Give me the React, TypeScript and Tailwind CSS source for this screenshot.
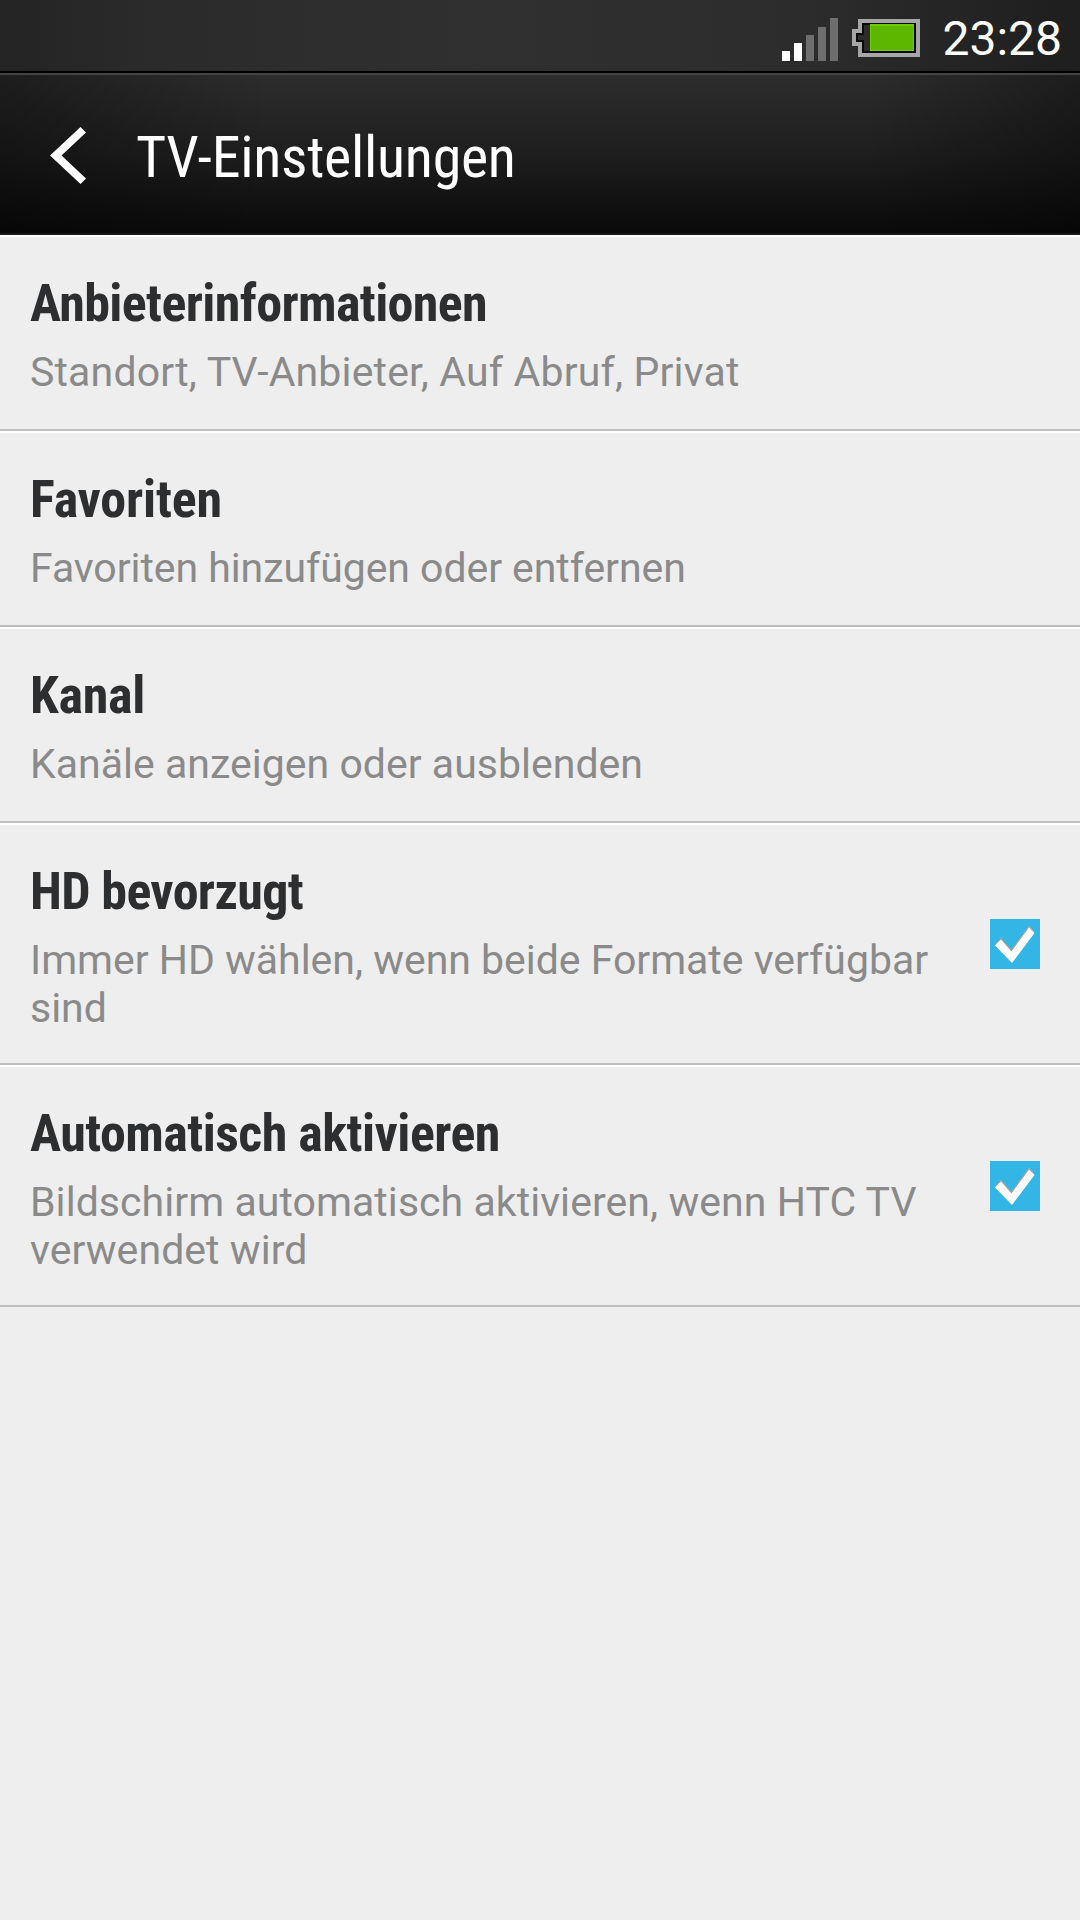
import React from 'react';

interface SettingItem {
    id: string;
    title: string;
    titleClass: string;
    summary: string;
    summaryClass: string;
    checked?: boolean;
}

const SETTINGS: SettingItem[] = [
    {
        id: 'provider',
        title: 'Anbieterinformationen',
        titleClass: 'tracking-[-0.62px]',
        summary: 'Standort, TV-Anbieter, Auf Abruf, Privat',
        summaryClass: 'tracking-[0.17px]',
    },
    {
        id: 'favorites',
        title: 'Favoriten',
        titleClass: 'tracking-[-0.2px]',
        summary: 'Favoriten hinzufügen oder entfernen',
        summaryClass: 'tracking-[-0.06px]',
    },
    {
        id: 'channel',
        title: 'Kanal',
        titleClass: 'tracking-[-0.3px]',
        summary: 'Kanäle anzeigen oder ausblenden',
        summaryClass: 'tracking-[0.02px]',
    },
    {
        id: 'hd',
        title: 'HD bevorzugt',
        titleClass: 'tracking-[-0.65px]',
        summary: 'Immer HD wählen, wenn beide Formate verfügbar sind',
        summaryClass: 'tracking-[-0.02px]',
        checked: true,
    },
    {
        id: 'wake',
        title: 'Automatisch aktivieren',
        titleClass: 'tracking-[-0.53px]',
        summary: 'Bildschirm automatisch aktivieren, wenn HTC TV verwendet wird',
        summaryClass: 'tracking-[0.06px]',
        checked: true,
    },
];

const SignalIcon: React.FC = () => (
    <svg width="56" height="44" viewBox="0 0 56 44" className="block">
        <path d="M0 33h8v10H0zM12 25h8v18h-8z" fill="#fff" />
        <path d="M24 17h8v26h-8zM36 9h8v34h-8zM48 0h8v43h-8z" fill="#6e6e6e" />
    </svg>
);

const BatteryIcon: React.FC = () => (
    <svg width="68" height="38" viewBox="0 0 68 38" className="block">
        <path d="M6 0h62v38H6V27H0V10h6z" fill="#a6a6a6" />
        <path d="M10 4h54v30H10V23H4v-9h6z" fill="#0a0a0a" />
        <path d="M12 6h6v26h-6v-11H6v-5h6z" fill="#2c2c2c" />
        <path d="M18 5h44v27H18z" fill="#6ccc00" />
        <path d="M19 7h42v24H19z" fill="#5db600" />
    </svg>
);

const CheckBox: React.FC = () => (
    <svg width="50" height="50" viewBox="0 0 50 50" className="block shrink-0">
        <path d="M0 0h50v50H0z" fill="#33b5e5" />
        <path d="M5 25l6-6.500 10.500 12L39 6.500l5.500 5.500L22 43z" fill="#9aa5aa" />
        <path d="M5 26.500l6-6 10.500 12L39 8.500l5.500 5.500L22 44z" fill="#fff" />
    </svg>
);

const SettingRow: React.FC<{ item: SettingItem }> = ({ item }) => (
    <div className="flex min-h-[196px] items-center border-t-2 border-b-2 border-t-white border-b-[#bebebe] pr-10 pl-[30px]">
        <div className="flex-1 self-start pt-[35px] pb-[31px]">
            <div className={`text-[52px] leading-[64px] font-bold whitespace-nowrap text-[#2d2e30] font-stretch-condensed ${item.titleClass}`}>
                {item.title}
            </div>
            <div className={`mt-3 max-w-[910px] text-[41px] leading-[48px] text-[#8a8a8a] ${item.summaryClass}`}>{item.summary}</div>
        </div>
        {item.checked && <CheckBox />}
    </div>
);

export default function App() {
    return (
        <div className="flex h-[1920px] w-[1080px] flex-col overflow-hidden bg-[#eeeeee] font-['Roboto','Noto_Sans',sans-serif]">
            <div className="flex h-[73px] shrink-0 items-start justify-end border-b-2 border-black bg-[linear-gradient(90deg,#242424_0%,#2b2b2b_15%,#303030_45%,#2c2c2c_75%,#1e1e1e_100%)] pr-[18px]">
                <div className="mt-[18px] mr-[14px]"><SignalIcon /></div>
                <div className="mt-[19px] mr-[22px]"><BatteryIcon /></div>
                <div className="text-[48px] leading-[78px] text-white">23:28</div>
            </div>
            <div className="flex h-[162px] shrink-0 items-center border-t-2 border-b-2 border-t-[#444444] border-b-[#181818] bg-[linear-gradient(90deg,rgba(0,0,0,0.35)_0%,rgba(0,0,0,0)_25%,rgba(0,0,0,0)_80%,rgba(0,0,0,0.35)_100%),linear-gradient(180deg,#2d2d2d_0%,#1e1e1e_50%,#0a0a0a_100%)] pt-0.5 pl-[50px]">
                <svg width="36" height="57" viewBox="0 0 36 57" className="block">
                    <path d="M30.500 0L36 5.500 11.500 28.500 36 51.500 30.500 57 0 28.500z" fill="#fff" />
                </svg>
                <h1 className="mt-[5px] ml-[50px] text-[58px] font-[450] tracking-[-0.28px] text-white font-stretch-condensed">TV-Einstellungen</h1>
            </div>
            <div className="flex flex-col">
                {SETTINGS.map((item) => (
                    <SettingRow key={item.id} item={item} />
                ))}
            </div>
        </div>
    );
}
